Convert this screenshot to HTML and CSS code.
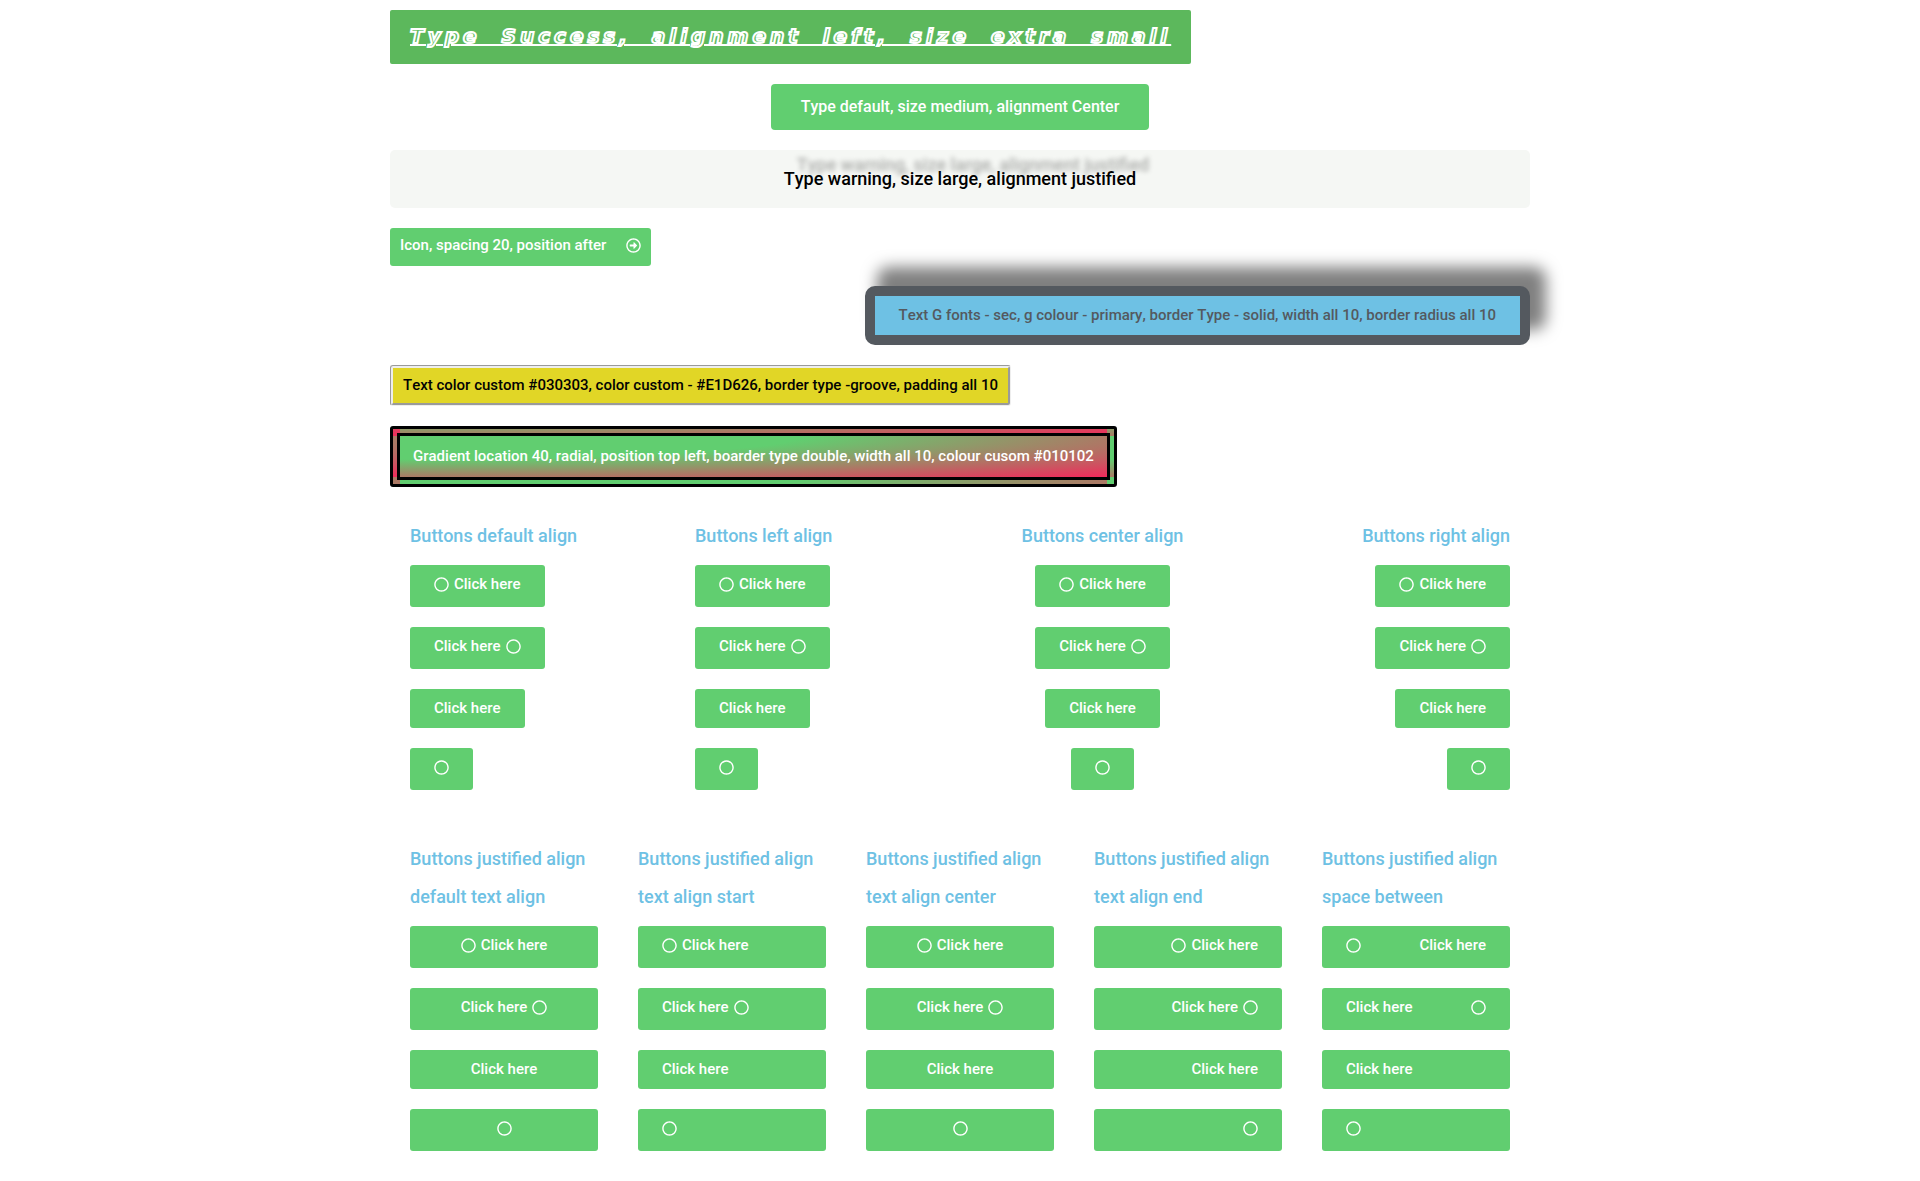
FILE: index.html
```
<!DOCTYPE html>
<html lang="en">
<head>
<meta charset="utf-8">
<title>Buttons</title>
<link rel="stylesheet" href="styles.css">
</head>
<body>
<svg width="0" height="0" class="sprite" aria-hidden="true">
  <symbol id="circle" viewBox="0 0 512 512"><path d="M256 8C119 8 8 119 8 256s111 248 248 248 248-111 248-248S393 8 256 8zm0 448c-110.5 0-200-89.5-200-200S145.5 56 256 56s200 89.5 200 200-89.5 200-200 200z"/></symbol>
  <symbol id="arrow" viewBox="0 0 512 512"><path d="M504 256C504 119 393 8 256 8S8 119 8 256s111 248 248 248 248-111 248-248zm-448 0c0-110.5 89.5-200 200-200s200 89.5 200 200-89.5 200-200 200S56 366.5 56 256zm72 20v-40c0-6.6 5.4-12 12-12h116v-67c0-10.7 12.9-16 20.5-8.5l99 99c4.7 4.7 4.7 12.3 0 17l-99 99c-7.6 7.6-20.5 2.2-20.5-8.5v-67H140c-6.6 0-12-5.4-12-12z"/></symbol>
</svg>
<main class="page">
  <section class="stack">
    <button class="btn btn-success">Type Success, alignment left, size extra small</button>
    <button class="btn btn-medium">Type default, size medium, alignment Center</button>
    <button class="btn btn-warning">Type warning, size large, alignment justified</button>
    <button class="btn btn-spaced">Icon, spacing 20, position after<svg class="icon"><use href="#arrow"/></svg></button>
    <button class="btn btn-solid">Text G fonts - sec, g colour - primary, border Type - solid, width all 10, border radius all 10</button>
    <button class="btn btn-groove">Text color custom #030303, color custom - #E1D626, border type -groove, padding all 10</button>
    <button class="btn btn-gradient">Gradient location 40, radial, position top left, boarder type double, width all 10, colour cusom #010102</button>
  </section>

  <section class="columns columns-four">
    <div class="column">
      <h2>Buttons default align</h2>
      <button class="btn"><svg class="icon"><use href="#circle"/></svg>Click here</button>
      <button class="btn">Click here<svg class="icon"><use href="#circle"/></svg></button>
      <button class="btn">Click here</button>
      <button class="btn" aria-label="Click"><svg class="icon"><use href="#circle"/></svg></button>
    </div>
    <div class="column">
      <h2>Buttons left align</h2>
      <button class="btn"><svg class="icon"><use href="#circle"/></svg>Click here</button>
      <button class="btn">Click here<svg class="icon"><use href="#circle"/></svg></button>
      <button class="btn">Click here</button>
      <button class="btn" aria-label="Click"><svg class="icon"><use href="#circle"/></svg></button>
    </div>
    <div class="column column-center">
      <h2>Buttons center align</h2>
      <button class="btn"><svg class="icon"><use href="#circle"/></svg>Click here</button>
      <button class="btn">Click here<svg class="icon"><use href="#circle"/></svg></button>
      <button class="btn">Click here</button>
      <button class="btn" aria-label="Click"><svg class="icon"><use href="#circle"/></svg></button>
    </div>
    <div class="column column-right">
      <h2>Buttons right align</h2>
      <button class="btn"><svg class="icon"><use href="#circle"/></svg>Click here</button>
      <button class="btn">Click here<svg class="icon"><use href="#circle"/></svg></button>
      <button class="btn">Click here</button>
      <button class="btn" aria-label="Click"><svg class="icon"><use href="#circle"/></svg></button>
    </div>
  </section>

  <section class="columns columns-five">
    <div class="column justified">
      <h2>Buttons justified align default text align</h2>
      <button class="btn"><svg class="icon"><use href="#circle"/></svg>Click here</button>
      <button class="btn">Click here<svg class="icon"><use href="#circle"/></svg></button>
      <button class="btn">Click here</button>
      <button class="btn" aria-label="Click"><svg class="icon"><use href="#circle"/></svg></button>
    </div>
    <div class="column justified text-start">
      <h2>Buttons justified align text align start</h2>
      <button class="btn"><svg class="icon"><use href="#circle"/></svg>Click here</button>
      <button class="btn">Click here<svg class="icon"><use href="#circle"/></svg></button>
      <button class="btn">Click here</button>
      <button class="btn" aria-label="Click"><svg class="icon"><use href="#circle"/></svg></button>
    </div>
    <div class="column justified">
      <h2>Buttons justified align text align center</h2>
      <button class="btn"><svg class="icon"><use href="#circle"/></svg>Click here</button>
      <button class="btn">Click here<svg class="icon"><use href="#circle"/></svg></button>
      <button class="btn">Click here</button>
      <button class="btn" aria-label="Click"><svg class="icon"><use href="#circle"/></svg></button>
    </div>
    <div class="column justified text-end">
      <h2>Buttons justified align text align end</h2>
      <button class="btn"><svg class="icon"><use href="#circle"/></svg>Click here</button>
      <button class="btn">Click here<svg class="icon"><use href="#circle"/></svg></button>
      <button class="btn">Click here</button>
      <button class="btn" aria-label="Click"><svg class="icon"><use href="#circle"/></svg></button>
    </div>
    <div class="column justified text-between">
      <h2>Buttons justified align space between</h2>
      <button class="btn"><svg class="icon"><use href="#circle"/></svg>Click here</button>
      <button class="btn">Click here<svg class="icon"><use href="#circle"/></svg></button>
      <button class="btn">Click here</button>
      <button class="btn" aria-label="Click"><svg class="icon"><use href="#circle"/></svg></button>
    </div>
  </section>
</main>
</body>
</html>
```
FILE: styles.css
```
* { box-sizing: border-box; }

body {
  margin: 0;
  background: #fff;
  font-family: Roboto, "Liberation Sans", sans-serif;
}

.sprite { position: absolute; }

.page {
  max-width: 1140px;
  margin: 0 auto;
  padding: 10px 0 30px;
}

.stack {
  display: flex;
  flex-direction: column;
  align-items: flex-start;
  gap: 20px;
}

.btn {
  display: flex;
  justify-content: center;
  align-items: flex-start;
  gap: 5px;
  padding: 12px 24px;
  border: 0;
  border-radius: 3px;
  background: #61ce70;
  color: #fff;
  font-family: inherit;
  font-size: 15px;
  font-weight: 500;
  line-height: 15px;
  font-kerning: none;
  cursor: pointer;
}

.icon {
  flex: none;
  width: 15px;
  height: 15px;
  margin-bottom: 3px;
  fill: currentColor;
}

.btn-success {
  padding: 13px 20px 15px;
  border-radius: 2px;
  background: #5cb85c;
  font-family: "DejaVu Sans", "Liberation Sans", sans-serif;
  font-size: 20px;
  font-style: italic;
  font-weight: 700;
  line-height: 26px;
  letter-spacing: 4px;
  word-spacing: 10px;
  text-decoration: underline 2px #fff;
  color: #5cb85c;
  -webkit-text-stroke: 2px #fff;
}

.btn-medium {
  align-self: center;
  padding: 15px 30px;
  border-radius: 4px;
  font-size: 16px;
  line-height: 16px;
}

.btn-warning {
  align-self: stretch;
  padding: 20px 40px;
  border-radius: 5px;
  background: #f5f7f4;
  color: #000;
  font-size: 18px;
  line-height: 18px;
  text-shadow: 13px -14px 5px rgba(0, 0, 0, 0.3);
}

.btn-spaced {
  gap: 20px;
  padding: 10px;
}

.btn-solid {
  align-self: flex-end;
  border: 10px solid #54595f;
  border-radius: 10px;
  background: #6ec1e4;
  color: #54595f;
  box-shadow: 14px -17px 15px 2px rgba(0, 0, 0, 0.5);
}

.btn-groove {
  padding: 10px;
  border: 3px groove #eee;
  background: #e1d626;
  color: #030303;
}

.btn-gradient {
  padding: 13px;
  border: 10px double #010102;
  background: radial-gradient(at top left, #61ce70 40%, #f2295b 100%);
}

.columns {
  display: grid;
  margin-top: 10px;
}

.columns-four { grid-template-columns: repeat(4, 1fr); }
.columns-five { grid-template-columns: repeat(5, 1fr); }

.column {
  display: flex;
  flex-direction: column;
  align-items: flex-start;
  gap: 20px;
  padding: 20px;
}

.column h2 {
  margin: 0 0 -10px;
  color: #6ec1e4;
  font-size: 18px;
  font-weight: 500;
  line-height: 38px;
}

.column-center { align-items: center; }
.column-right { align-items: flex-end; }
.justified { align-items: stretch; }
.text-start .btn { justify-content: flex-start; }
.text-end .btn { justify-content: flex-end; }
.text-between .btn { justify-content: space-between; }
```
